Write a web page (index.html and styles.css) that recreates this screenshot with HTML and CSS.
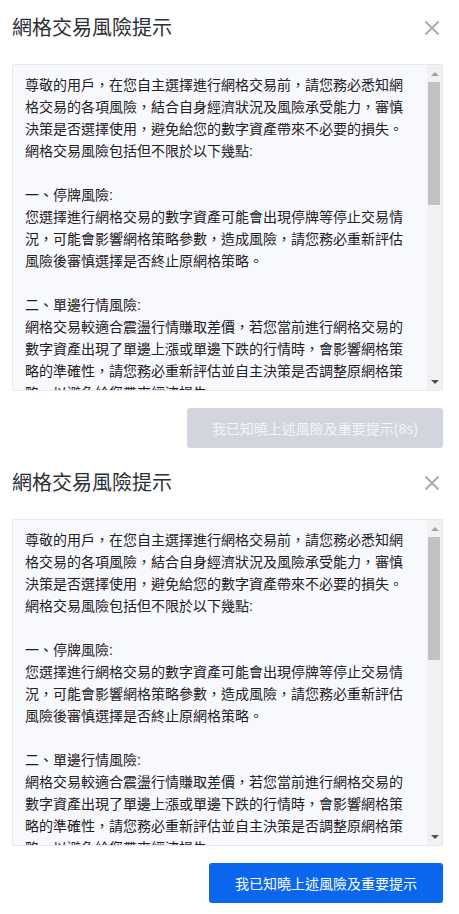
FILE: index.html
```html
<!DOCTYPE html>
<html lang="zh-Hant">
<head>
<meta charset="utf-8">
<title>網格交易風險提示</title>
<link rel="stylesheet" href="styles.css">
</head>
<body>
<section class="dialog">
  <header class="dialog-head">
    <h2 class="dialog-title">網格交易風險提示</h2>
    <button class="close" aria-label="關閉">
      <svg width="16" height="16" viewBox="0 0 16 16"><path d="M1.5 1.5L14.5 14.5M14.5 1.5L1.5 14.5" stroke="#a3a9b6" stroke-width="1.8" fill="none"/></svg>
    </button>
  </header>
  <div class="notice">
    <div class="notice-text">
      <p>尊敬的用戶，在您自主選擇進行網格交易前，請您務必悉知網格交易的各項風險，結合自身經濟狀況及風險承受能力，審慎決策是否選擇使用，避免給您的數字資產帶來不必要的損失。<br>網格交易風險包括但不限於以下幾點:</p>
      <p>一、停牌風險:<br>您選擇進行網格交易的數字資產可能會出現停牌等停止交易情況，可能會影響網格策略參數，造成風險，請您務必重新評估風險後審慎選擇是否終止原網格策略。</p>
      <p>二、單邊行情風險:<br>網格交易較適合震盪行情賺取差價，若您當前進行網格交易的數字資產出現了單邊上漲或單邊下跌的行情時，會影響網格策略的準確性，請您務必重新評估並自主決策是否調整原網格策略，以避免給您帶來經濟損失。</p>
    </div>
    <div class="scrollbar" aria-hidden="true">
      <span class="sb-btn sb-up"></span>
      <span class="sb-track"><span class="sb-thumb"></span></span>
      <span class="sb-btn sb-down"></span>
    </div>
  </div>
  <div class="dialog-foot">
    <button class="confirm disabled" disabled>我已知曉上述風險及重要提示(8s)</button>
  </div>
</section>
<section class="dialog">
  <header class="dialog-head">
    <h2 class="dialog-title">網格交易風險提示</h2>
    <button class="close" aria-label="關閉">
      <svg width="16" height="16" viewBox="0 0 16 16"><path d="M1.5 1.5L14.5 14.5M14.5 1.5L1.5 14.5" stroke="#a3a9b6" stroke-width="1.8" fill="none"/></svg>
    </button>
  </header>
  <div class="notice">
    <div class="notice-text">
      <p>尊敬的用戶，在您自主選擇進行網格交易前，請您務必悉知網格交易的各項風險，結合自身經濟狀況及風險承受能力，審慎決策是否選擇使用，避免給您的數字資產帶來不必要的損失。<br>網格交易風險包括但不限於以下幾點:</p>
      <p>一、停牌風險:<br>您選擇進行網格交易的數字資產可能會出現停牌等停止交易情況，可能會影響網格策略參數，造成風險，請您務必重新評估風險後審慎選擇是否終止原網格策略。</p>
      <p>二、單邊行情風險:<br>網格交易較適合震盪行情賺取差價，若您當前進行網格交易的數字資產出現了單邊上漲或單邊下跌的行情時，會影響網格策略的準確性，請您務必重新評估並自主決策是否調整原網格策略，以避免給您帶來經濟損失。</p>
    </div>
    <div class="scrollbar" aria-hidden="true">
      <span class="sb-btn sb-up"></span>
      <span class="sb-track"><span class="sb-thumb"></span></span>
      <span class="sb-btn sb-down"></span>
    </div>
  </div>
  <div class="dialog-foot">
    <button class="confirm">我已知曉上述風險及重要提示</button>
  </div>
</section>
</body>
</html>
```

FILE: styles.css
```css
html, body {
  margin: 0;
  padding: 0;
  background: #ffffff;
}
body {
  font-family: "Liberation Sans", "Noto Sans CJK SC", sans-serif;
  color: #1e2026;
}
.dialog {
  height: 455px;
  box-sizing: border-box;
  padding: 14px 16px 0 12px;
  display: flex;
  flex-direction: column;
}
.dialog-head {
  display: flex;
  align-items: center;
  justify-content: space-between;
  height: 28px;
}
.dialog-title {
  margin: 0;
  font-size: 20px;
  line-height: 28px;
  font-weight: 400;
  color: #2b2f36;
  font-family: "Liberation Sans", "Noto Sans CJK SC", sans-serif;
}
.close {
  border: 0;
  background: none;
  padding: 0;
  margin-right: 3px;
  width: 16px;
  height: 16px;
  display: flex;
  cursor: pointer;
}
.notice {
  margin-top: 22px;
  height: 327px;
  box-sizing: border-box;
  border: 1px solid #e6e8ec;
  border-radius: 2px;
  background: #f8f9fd;
  display: flex;
  overflow: hidden;
}
.notice-text {
  flex: 1;
  min-width: 0;
  overflow: hidden;
  padding: 9px 18px 0 12px;
  font-size: 14px;
  line-height: 22px;
  color: #1e2026;
}
.notice-text p {
  margin: 0 0 22px 0;
}
.scrollbar {
  width: 15px;
  flex: none;
  background: #f1f1f1;
  display: flex;
  flex-direction: column;
}
.sb-btn {
  height: 17px;
  flex: none;
  display: flex;
  align-items: center;
  justify-content: center;
}
.sb-btn::before {
  content: "";
  width: 0;
  height: 0;
  border-left: 4px solid transparent;
  border-right: 4px solid transparent;
}
.sb-up::before {
  border-bottom: 4px solid #a3a3a3;
}
.sb-down::before {
  border-top: 4px solid #505050;
}
.sb-track {
  flex: 1;
  display: flex;
  flex-direction: column;
}
.sb-thumb {
  height: 123px;
  margin: 0 2px 0 1px;
  background: #c1c1c1;
}
.dialog-foot {
  display: flex;
  justify-content: flex-end;
  margin-top: 17px;
}
.confirm {
  height: 40px;
  padding: 0 26px;
  border: 0;
  border-radius: 3px;
  background: #0a66ed;
  color: #ffffff;
  font-size: 14px;
  font-family: "Liberation Sans", "Noto Sans CJK SC", sans-serif;
  cursor: pointer;
}
.confirm.disabled {
  background: #d2d4de;
  color: #f4f5f8;
  cursor: not-allowed;
  padding: 0 25px;
}
```
